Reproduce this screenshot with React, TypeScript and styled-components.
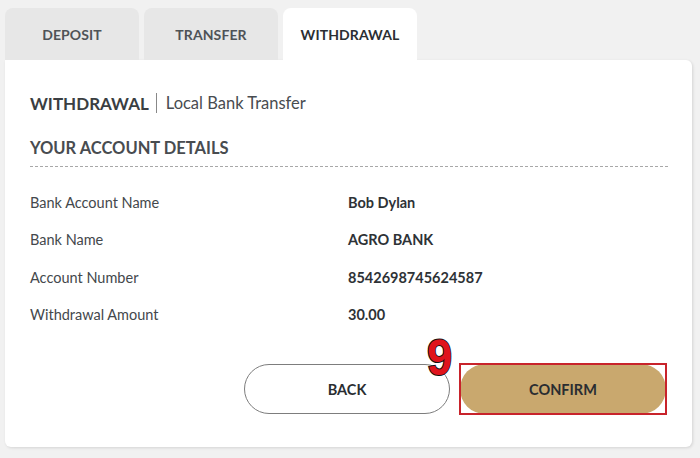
import React from 'react'
import styled, { createGlobalStyle } from 'styled-components'

const GlobalStyle = createGlobalStyle`
  html, body {
    margin: 0;
    padding: 0;
    background: #f1f1f1;
    font-family: Lato, "Open Sans", sans-serif;
  }
`

const Wrapper = styled.div`
  padding: 8px 8px 0 5px;
  width: 700px;
  height: 458px;
  box-sizing: border-box;
`

const Tabs = styled.div`
  display: flex;
  gap: 5px;
`

const Tab = styled.div<{ active?: boolean }>`
  width: 134px;
  height: 52px;
  display: flex;
  align-items: center;
  justify-content: center;
  border-radius: 8px 8px 0 0;
  background: ${({ active }) => (active ? '#ffffff' : '#e7e7e7')};
  color: ${({ active }) => (active ? '#2b2f33' : '#4f5357')};
  font-size: 14px;
  font-weight: 700;
  letter-spacing: 0.1px;
`

const Card = styled.div`
  background: #fff;
  width: 687px;
  height: 387px;
  border-radius: 0 6px 6px 6px;
  box-shadow: 1px 1px 3px rgba(0, 0, 0, 0.12);
  padding: 32px 25px 0 25px;
  box-sizing: border-box;
  color: #3d4145;
`

const TitleRow = styled.div`
  display: flex;
  align-items: center;
  height: 22px;
`

const Title = styled.span`
  font-size: 17px;
  font-weight: 700;
  color: #3a3e42;
`

const Divider = styled.span`
  width: 1px;
  height: 20px;
  background: #888;
  margin: 0 9px 0 7px;
`

const Subtitle = styled.span`
  font-size: 16.5px;
  color: #484c50;
`

const SectionHeading = styled.div`
  margin-top: 24px;
  padding-bottom: 8px;
  border-bottom: 1px dashed #a8a8a8;
  font-size: 16.5px;
  font-weight: 700;
  color: #484c50;
  width: 638px;
`

const Details = styled.div`
  margin-top: 26px;
  display: grid;
  grid-template-columns: 318px 1fr;
  row-gap: 18px;
  font-size: 14.5px;
  line-height: 19.3px;
`

const Label = styled.div`
  color: #44484c;
`

const Value = styled.div`
  color: #2e3236;
  font-weight: 700;
`

const Actions = styled.div`
  margin-top: 40px;
  display: flex;
  justify-content: flex-end;
  gap: 10px;
  padding-right: 1px;
`

const Button = styled.button<{ primary?: boolean }>`
  position: relative;
  width: 206px;
  height: 50px;
  border-radius: 25px;
  font-family: Lato, sans-serif;
  font-size: 14.5px;
  font-weight: 700;
  color: #2a2d31;
  background: ${({ primary }) => (primary ? '#c9a86e' : '#fff')};
  border: ${({ primary }) => (primary ? 'none' : '1px solid #7d7d7d')};
  cursor: pointer;
`

const Highlight = styled.span`
  position: absolute;
  inset: -1px;
  border: 2px solid #c8232b;
  pointer-events: none;
`

const StepBadge = styled.span`
  position: absolute;
  left: -33px;
  top: -31px;
  font-family: "Liberation Sans", sans-serif;
  font-size: 50px;
  font-weight: 700;
  color: #e0141c;
  -webkit-text-stroke: 2px #111;
  paint-order: stroke fill;
  line-height: 1;
  transform: scaleX(0.9);
  transform-origin: left top;
`

const rows = [
  ['Bank Account Name', 'Bob Dylan'],
  ['Bank Name', 'AGRO BANK'],
  ['Account Number', '8542698745624587'],
  ['Withdrawal Amount', '30.00'],
]

export default function App() {
  return (
    <Wrapper>
      <GlobalStyle />
      <Tabs>
        <Tab>DEPOSIT</Tab>
        <Tab>TRANSFER</Tab>
        <Tab active>WITHDRAWAL</Tab>
      </Tabs>
      <Card>
        <TitleRow>
          <Title>WITHDRAWAL</Title>
          <Divider />
          <Subtitle>Local Bank Transfer</Subtitle>
        </TitleRow>
        <SectionHeading>YOUR ACCOUNT DETAILS</SectionHeading>
        <Details>
          {rows.map(([label, value]) => (
            <React.Fragment key={label}>
              <Label>{label}</Label>
              <Value>{value}</Value>
            </React.Fragment>
          ))}
        </Details>
        <Actions>
          <Button>BACK</Button>
          <Button primary>
            CONFIRM
            <Highlight />
            <StepBadge>9</StepBadge>
          </Button>
        </Actions>
      </Card>
    </Wrapper>
  )
}
